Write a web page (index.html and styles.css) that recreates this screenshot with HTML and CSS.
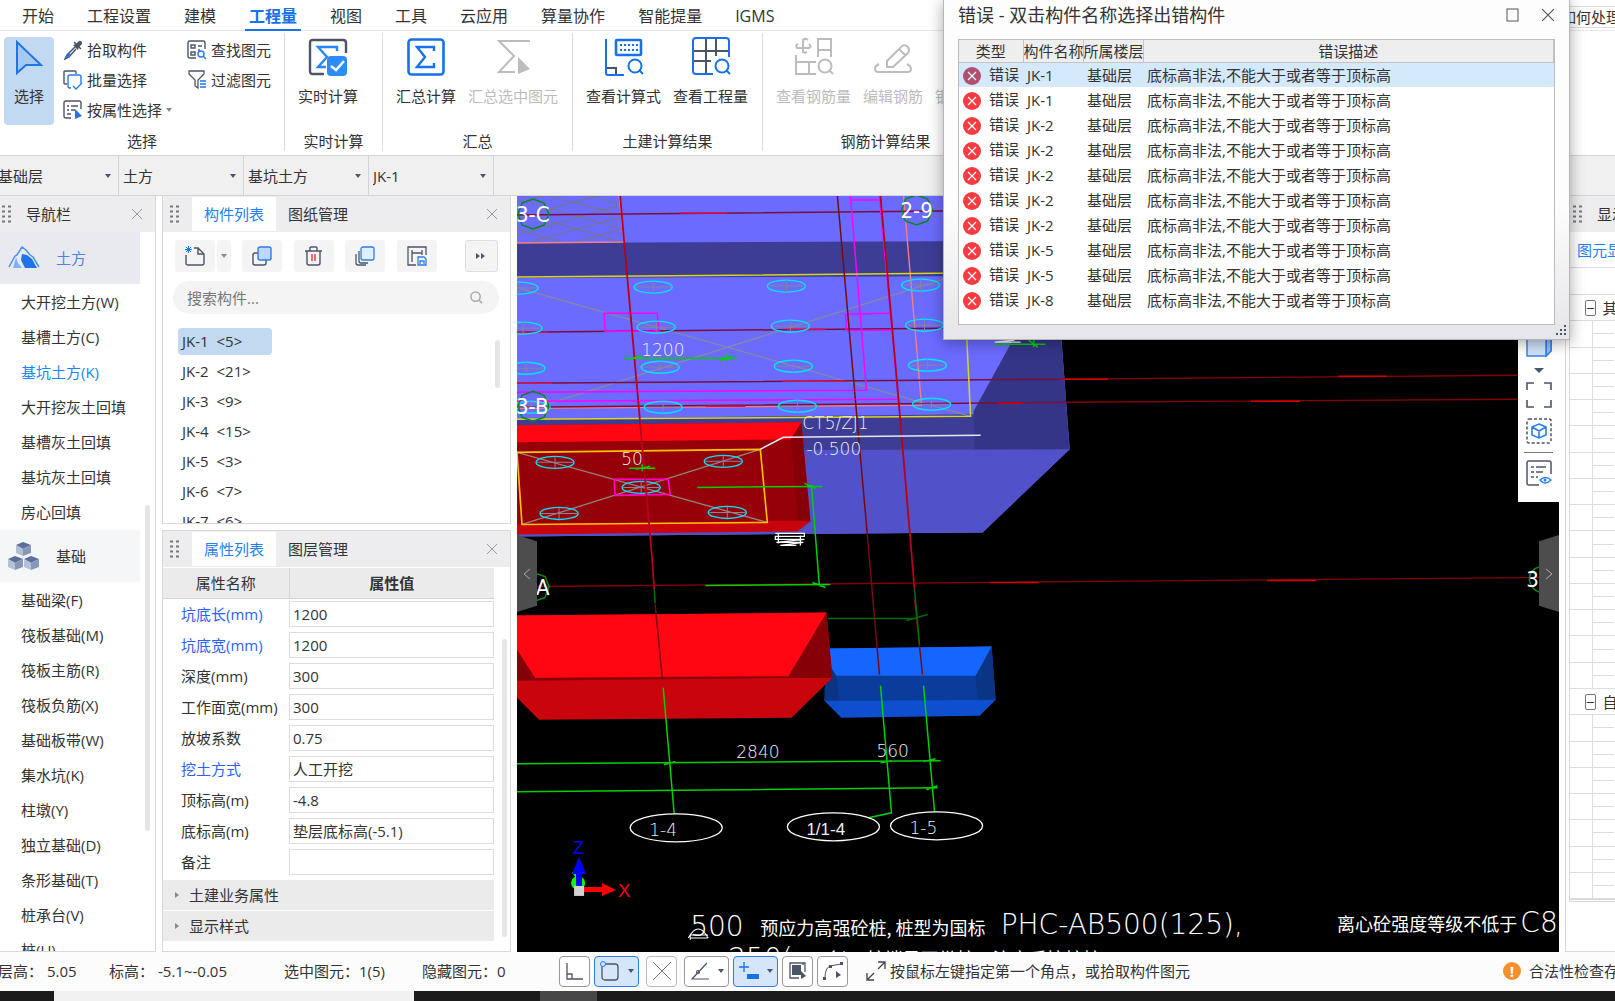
FILE: index.html
```html
<!DOCTYPE html>
<html lang="zh-CN">
<head>
    <meta charset="UTF-8">
    <title>工程量</title>
    <link rel="stylesheet" href="styles.css">
</head>
<body>

<!-- 公用图形 -->
<svg class="defs" aria-hidden="true">
    <symbol id="close" viewBox="0 0 12 12"><path d="M1 1L11 11M11 1L1 11" fill="none" stroke="currentColor"/></symbol>
    <symbol id="grip" viewBox="0 0 9 19">
        <path d="M0 1.5H9M0 6.5H9M0 11.5H9M0 16.5H9" stroke="#777" stroke-width="2" stroke-dasharray="3 3"/>
    </symbol>
    <symbol id="error" viewBox="0 0 18 18">
        <circle cx="9" cy="9" r="9" fill="currentColor"/>
        <path d="M5 5L13 13M13 5L5 13" stroke="#fff" stroke-width="1.2"/>
    </symbol>
    <symbol id="lens" viewBox="0 0 14 14">
        <circle cx="6" cy="6" r="5" fill="none" stroke="currentColor" stroke-width="1.6"/>
        <path d="M10 10L13 13" stroke="currentColor" stroke-width="1.8"/>
    </symbol>
</svg>

<nav class="menu">
    <a href="#">开始</a>
    <a href="#">工程设置</a>
    <a href="#">建模</a>
    <a href="#" class="active">工程量</a>
    <a href="#">视图</a>
    <a href="#">工具</a>
    <a href="#">云应用</a>
    <a href="#">算量协作</a>
    <a href="#">智能提量</a>
    <a href="#">IGMS</a>
    <input class="ask" type="text" value="如何处理" aria-label="帮助搜索">
</nav>

<div class="ribbon">
    <section class="group pick">
        <div class="tools">
            <button class="big on">
                <svg width="28" height="38" viewBox="0 0 28 38"><path d="M2 4V35L11 27L26 27Z" fill="#a9c8f0" stroke="#1f74e8" stroke-width="2"/></svg>
                选择
            </button>
            <div class="stack">
                <button>
                    <svg width="20" height="20" viewBox="0 0 20 20"><path d="M11 2L18 9M12 7L4 15L2 19L6 17L13 9" fill="none" stroke="#4c5468" stroke-width="1.5"/><path d="M10 5L13 4L16 1Q19 0 19 4L16 7L15 10Z" fill="#4c5468"/><path d="M5 13L8 14L4 18L2 18Z" fill="#1f74e8"/></svg>
                    拾取构件
                </button>
                <button>
                    <svg width="20" height="20" viewBox="0 0 20 20" fill="none" stroke-width="1.4"><path d="M4 14H2Q1 14 1 13V2Q1 1 2 1H12Q13 1 13 2V4" stroke="#4c5468"/><path d="M8 18H7Q5 18 5 16V7Q5 5 7 5H16Q18 5 18 7V14M10 16L13 19L19 13" stroke="#2b7de9"/></svg>
                    批量选择
                </button>
                <button>
                    <svg width="20" height="20" viewBox="0 0 20 20"><path d="M8 18H3Q1 18 1 16V3Q1 1 3 1H16Q18 1 18 3V9M4 6H6M8 6H15M4 10H6M8 10H12M4 14H8" fill="none" stroke="#4c5468" stroke-width="1.4"/><path d="M12 9V19L19 16Z" fill="#1f74e8"/></svg>
                    按属性选择<i class="arrow light"></i>
                </button>
            </div>
            <div class="stack">
                <button>
                    <svg width="20" height="20" viewBox="0 0 20 20" fill="none" stroke-width="1.4"><path d="M9 18H3Q1 18 1 16V3Q1 1 3 1H16Q18 1 18 3V9M4 5H8V8H4ZM4 12H8V15H4ZM11 6H15M11 10H13" stroke="#4c5468"/><circle cx="14" cy="14" r="3" stroke="#2b7de9"/><path d="M16 16L19 19" stroke="#2b7de9"/></svg>
                    查找图元
                </button>
                <button>
                    <svg width="20" height="20" viewBox="0 0 20 20" fill="none"><path d="M2 1H17V4L11 10V18L8 16V10L2 4Z" stroke="#4c5468" stroke-width="1.3"/><path d="M13 11H19M13 14H19M13 17H19" stroke="#1f74e8" stroke-width="1.6"/></svg>
                    过滤图元
                </button>
            </div>
        </div>
        <h2>选择</h2>
    </section>
    <section class="group single">
        <div class="tools">
            <button class="big">
                <svg width="40" height="38" viewBox="0 0 40 38" fill="none"><path d="M16 36H5Q2 36 2 33V5Q2 2 5 2H35Q38 2 38 5V15" stroke="#4c5468" stroke-width="2.4"/><path d="M29 13V9H10L19 19L10 29H18" stroke="#2b86f5" stroke-width="2.4"/><rect x="19" y="18" width="20" height="20" rx="4" fill="#2b8cff"/><path d="M23 28L28 32L36 23" stroke="#fff" stroke-width="2.4"/></svg>
                实时计算
            </button>
        </div>
        <h2>实时计算</h2>
    </section>
    <section class="group">
        <div class="tools">
            <button class="big">
                <svg width="38" height="38" viewBox="0 0 38 38" fill="none" stroke="#1671ea"><rect x="1.5" y="1.5" width="35" height="35" rx="3" stroke-width="2.6"/><path d="M27 13V9H10L18 19L10 29H27V25" stroke-width="2.4"/></svg>
                汇总计算
            </button>
            <button class="big" disabled>
                <svg width="38" height="38" viewBox="0 0 38 38"><path d="M36 3H5L20 18L5 34H21" fill="none" stroke="#bcbcbc" stroke-width="2"/><path d="M24 19V36L36 31Z" fill="#bcbcbc"/></svg>
                汇总选中图元
            </button>
        </div>
        <h2>汇总</h2>
    </section>
    <section class="group">
        <div class="tools">
            <button class="big">
                <svg width="40" height="40" viewBox="0 0 40 40" fill="none" stroke="#1671ea" stroke-width="2"><path d="M2 2V36Q2 38 4 38H20"/><path d="M3 31H12V37" stroke="#4c5468"/><rect x="12" y="3" width="25" height="15" rx="1" stroke-width="2.6"/><path d="M16 8H34M16 13H34" stroke-dasharray="2 2"/><circle cx="31" cy="29" r="6.5"/><path d="M35 33L39 37"/></svg>
                查看计算式
            </button>
            <button class="big">
                <svg width="40" height="40" viewBox="0 0 40 40" fill="none" stroke-width="2"><path d="M15 2V36M25 2V19M2 14H37M2 24H20" stroke="#4c5468"/><path d="M22 37H5Q2 37 2 34V4Q2 1 5 1H35Q38 1 38 4V20" stroke="#1671ea"/><circle cx="31" cy="29" r="6.5" stroke="#1671ea"/><path d="M35 33L39 37" stroke="#1671ea"/></svg>
                查看工程量
            </button>
        </div>
        <h2>土建计算结果</h2>
    </section>
    <section class="group steel">
        <div class="tools">
            <button class="big" disabled>
                <svg width="40" height="40" viewBox="0 0 40 40" fill="none" stroke="#bcbcbc" stroke-width="2"><path d="M9 16V4Q9 1 12 2M14 3Q10 0 9 4M4 7Q1 8 3 11H15Q18 10 15 7M9 13Q9 17 13 15M24 20V2H37V20M24 13H37M2 18V37H22M2 25H22M15 25V37"/><circle cx="31" cy="29" r="6.5"/><path d="M35 33L39 37"/></svg>
                查看钢筋量
            </button>
            <button class="big" disabled>
                <svg width="38" height="38" viewBox="0 0 38 38" fill="none" stroke="#bcbcbc" stroke-width="2"><path d="M5 26Q1 28 1 31Q1 34 5 34H33Q37 34 37 31Q37 28 33 26M13 29V23L28 8Q31 6 34 9Q36 12 34 15L19 29ZM25 11L31 17"/></svg>
                编辑钢筋
            </button>
            <button class="big" disabled>
                <svg width="38" height="38" viewBox="0 0 38 38" fill="none" stroke="#bcbcbc" stroke-width="2"><path d="M19 3L34 11V27L19 35L4 27V11Z"/></svg>
                钢筋三维
            </button>
        </div>
        <h2>钢筋计算结果</h2>
    </section>
</div>

<div class="filters">
    <label><select aria-label="楼层"><option>基础层</option></select><i class="arrow"></i></label>
    <label><select aria-label="类别"><option>土方</option></select><i class="arrow"></i></label>
    <label><select aria-label="构件类型"><option>基坑土方</option></select><i class="arrow"></i></label>
    <label><select aria-label="构件"><option>JK-1</option></select><i class="arrow"></i></label>
</div>

<main class="main">
    <!-- 导航栏 -->
    <aside class="panel side">
        <div class="head">
            <svg class="grip"><use href="#grip"/></svg>
            <span class="title">导航栏</span>
            <button class="close" aria-label="关闭"><svg><use href="#close"/></svg></button>
        </div>
        <div class="tree">
            <div class="cat active">
                <svg width="32" height="24" viewBox="0 0 32 24"><path d="M1 21L7 10L9 9L14 1L18 4L22 9L25 11L31 21" fill="none" stroke="#4b90ef" stroke-width="1.5"/><path d="M14 8L19 9L24 13L29 22H17L13 14Z" fill="#1f74e8"/><path d="M8 11L10 17L14 22H5Z" fill="#7fb3f7"/></svg>
                土方
            </div>
            <ul>
                <li>大开挖土方(W)</li>
                <li>基槽土方(C)</li>
                <li class="active">基坑土方(K)</li>
                <li>大开挖灰土回填</li>
                <li>基槽灰土回填</li>
                <li>基坑灰土回填</li>
                <li>房心回填</li>
            </ul>
            <div class="cat">
                <svg width="32" height="30" viewBox="0 0 32 30">
                    <g id="box"><path d="M8 4L15 1L23 4L15 8Z" fill="#5b6f98"/><path d="M8 4L15 8V15L8 12Z" fill="#b4bfd6"/><path d="M23 4L15 8V15L23 12Z" fill="#8797b8"/></g>
                    <use href="#box" x="-8" y="14"/><use href="#box" x="8" y="14"/>
                </svg>
                基础
            </div>
            <ul>
                <li>基础梁(F)</li>
                <li>筏板基础(M)</li>
                <li>筏板主筋(R)</li>
                <li>筏板负筋(X)</li>
                <li>基础板带(W)</li>
                <li>集水坑(K)</li>
                <li>柱墩(Y)</li>
                <li>独立基础(D)</li>
                <li>条形基础(T)</li>
                <li>桩承台(V)</li>
                <li>桩(U)</li>
            </ul>
            <i class="bar"></i>
        </div>
    </aside>

    <div class="middle">
        <!-- 构件列表 -->
        <section class="panel parts">
            <div class="head">
                <svg class="grip"><use href="#grip"/></svg>
                <button class="tab active">构件列表</button>
                <button class="tab">图纸管理</button>
                <button class="close" aria-label="关闭"><svg><use href="#close"/></svg></button>
            </div>
            <div class="toolbar">
                <span class="split">
                    <button aria-label="新建"><svg width="20" height="20" viewBox="0 0 20 20" fill="none"><path d="M9 2H13L19 8V17Q19 19 17 19H3Q1 19 1 17V9M13 2V8H19" stroke="#4c5468" stroke-width="1.4"/><path d="M1 1L6 6M6 1L1 6M3.5 0V7M0 3.5H7" stroke="#1f74e8"/></svg></button>
                    <button class="drop" aria-label="更多新建"><i class="arrow light"></i></button>
                </span>
                <button aria-label="复制"><svg width="20" height="20" viewBox="0 0 20 20"><path d="M6 7H3Q1 7 1 9V17Q1 19 3 19H12Q14 19 14 17V14" fill="none" stroke="#4c5468" stroke-width="1.4"/><rect x="6" y="1" width="13" height="13" rx="2" fill="#bcd8fb" stroke="#2b7de9" stroke-width="1.4"/></svg></button>
                <button aria-label="删除"><svg width="20" height="20" viewBox="0 0 20 20" fill="none" stroke="#4c5468" stroke-width="1.4"><path d="M1 5H18M6 5V2Q6 1 7 1H12Q13 1 13 2V5M3 5V17Q3 19 5 19H14Q16 19 16 17V5"/><path d="M8 8V15M11 8V15" stroke="#e8343c"/></svg></button>
                <button aria-label="层间复制"><svg width="20" height="20" viewBox="0 0 20 20" fill="none" stroke="#4c5468" stroke-width="1.3"><path d="M4 5V15Q4 17 6 17H13M1 8V17Q1 19 3 19H11"/><rect x="6" y="1" width="13" height="13" rx="2" fill="#e1eefd" stroke="#2b7de9"/></svg></button>
                <button aria-label="构件存档"><svg width="20" height="20" viewBox="0 0 20 20" fill="none" stroke="#4c5468" stroke-width="1.3"><path d="M9 19H1V1H19V9M5 4V16M5 7H15M15 4V9"/><path d="M11 11H17L19 13V19H11ZM13 18V15H17V18" stroke="#2b7de9"/></svg></button>
                <button class="more" aria-label="展开"><svg width="12" height="10" viewBox="0 0 12 10"><path d="M1 2L5 5L1 8ZM6 2L10 5L6 8Z" fill="#4c5468"/></svg></button>
            </div>
            <label class="search">
                <input type="text" placeholder="搜索构件..." aria-label="搜索构件">
                <svg width="13" height="13"><use href="#lens"/></svg>
            </label>
            <ul class="list">
                <li class="on">JK-1 <span>&lt;5&gt;</span></li>
                <li>JK-2 <span>&lt;21&gt;</span></li>
                <li>JK-3 <span>&lt;9&gt;</span></li>
                <li>JK-4 <span>&lt;15&gt;</span></li>
                <li>JK-5 <span>&lt;3&gt;</span></li>
                <li>JK-6 <span>&lt;7&gt;</span></li>
                <li>JK-7 <span>&lt;6&gt;</span></li>
            </ul>
            <i class="bar"></i>
        </section>

        <!-- 属性列表 -->
        <section class="panel props">
            <div class="head">
                <svg class="grip"><use href="#grip"/></svg>
                <button class="tab active">属性列表</button>
                <button class="tab">图层管理</button>
                <button class="close" aria-label="关闭"><svg><use href="#close"/></svg></button>
            </div>
            <table>
                <thead>
                <tr><th>属性名称</th><th>属性值</th></tr>
                </thead>
                <tbody>
                <tr class="key"><td><label for="p1">坑底长(mm)</label></td><td><input id="p1" type="text" value="1200"></td></tr>
                <tr class="key"><td><label for="p2">坑底宽(mm)</label></td><td><input id="p2" type="text" value="1200"></td></tr>
                <tr><td><label for="p3">深度(mm)</label></td><td><input id="p3" type="text" value="300"></td></tr>
                <tr><td><label for="p4">工作面宽(mm)</label></td><td><input id="p4" type="text" value="300"></td></tr>
                <tr><td><label for="p5">放坡系数</label></td><td><input id="p5" type="text" value="0.75"></td></tr>
                <tr class="key"><td><label for="p6">挖土方式</label></td><td><input id="p6" type="text" value="人工开挖"></td></tr>
                <tr><td><label for="p7">顶标高(m)</label></td><td><input id="p7" type="text" value="-4.8"></td></tr>
                <tr><td><label for="p8">底标高(m)</label></td><td><input id="p8" type="text" value="垫层底标高(-5.1)"></td></tr>
                <tr><td><label for="p9">备注</label></td><td><input id="p9" type="text" value=""></td></tr>
                </tbody>
            </table>
            <button class="fold">土建业务属性</button>
            <button class="fold">显示样式</button>
            <i class="bar"></i>
        </section>
    </div>

    <!-- 绘图区 -->
    <div class="view">
        <svg class="scene" viewBox="517 197 1042 755" preserveAspectRatio="xMinYMin slice">
            <defs>
                <g id="pile"><ellipse rx="19" ry="6" fill="none" stroke="#00e5ff" stroke-width="1.4"/><path d="M-18 0H18M0 -6V6" stroke="#84849c"/></g>
            </defs>
            <!-- 大基坑 -->
            <path d="M517 197H1050L1069 450L982 533L517 537Z" fill="#6b6bff"/>
            <path d="M517 244L1000 242V277L517 279Z" fill="#3d3d96"/>
            <path d="M517 420L975 415V451H517Z" fill="#3d3d96"/>
            <path d="M1050 197L1069 451H974L973 412L1018 330Z" fill="#353588"/>
            <path d="M517 451L1069 450L982 533L517 537Z" fill="#5151c9"/>
            <g fill="none" stroke="#77778a">
                <path d="M517 203L545 197M517 220L595 197M517 236L620 206M530 243L622 218M575 243L622 230M517 213L620 243M530 204L622 230M550 197L621 216M517 230L560 243M590 197L620 205"/>
                <path d="M519 289L970 417M540 407L943 280" stroke="#8787a6" stroke-width="1.3"/>
            </g>
            <path d="M903 197L921 406L517 409M619 197L624 243L517 244" fill="none" stroke="#f77c86" stroke-width="1.4"/>
            <g stroke="#7c0c3c" stroke-width="1.5">
                <path d="M517 216L943 212M517 333L943 329M517 384L1066 380M517 408L1066 403"/>
            </g>
            <path d="M680 214H727M517 333H548M785 330H825M517 384H552M782 382H845M705 407H745" stroke="#d8104c" stroke-width="1.5"/>
            <g fill="none" stroke="#f0f" stroke-width="1.5">
                <path d="M604 314H657L659 332H605ZM850 197L866 391L517 393M850 201H880M879 197L898 400L517 402M889 314L845 315L846 331H892"/>
            </g>
            <path d="M517 278L963 274L970 417L517 420" fill="none" stroke="#d9d61c" stroke-width="1.5"/>
            <use href="#pile" x="519" y="289"/><use href="#pile" x="653" y="288"/><use href="#pile" x="786" y="287"/><use href="#pile" x="920" y="286"/>
            <use href="#pile" x="523" y="329"/><use href="#pile" x="656" y="328"/><use href="#pile" x="790" y="327"/><use href="#pile" x="924" y="326"/>
            <use href="#pile" x="526" y="369"/><use href="#pile" x="660" y="368"/><use href="#pile" x="793" y="367"/><use href="#pile" x="927" y="366"/>
            <use href="#pile" x="531" y="408"/><use href="#pile" x="663" y="408"/><use href="#pile" x="797" y="407"/><use href="#pile" x="931" y="405"/>

            <!-- 红色基坑 -->
            <path d="M517 426L801 423L810 522L797 532L517 535Z" fill="#c8040c"/>
            <path d="M517 443L790 440L797 521L517 525Z" fill="#960008"/>
            <path d="M801 423L810 522L797 521L790 440Z" fill="#850007"/>
            <path d="M517 426L801 423L790 440L517 443Z" fill="#ff0612"/>
            <path d="M517 453L767 523M522 525L760 450" stroke="#958080" stroke-width="1.3"/>
            <path d="M517 453L760 450L767 523L522 525Z" fill="none" stroke="#ffc400" stroke-width="1.6"/>
            <path d="M614 480H668L670 495L615 496Z" fill="none" stroke="#f0c" stroke-width="1.6"/>
            <use href="#pile" x="555" y="463"/><use href="#pile" x="723" y="462"/><use href="#pile" x="641" y="488"/><use href="#pile" x="559" y="514"/><use href="#pile" x="727" y="513"/>

            <!-- 蓝色基坑 -->
            <path d="M829 649L991 647L995 700L979 716L841 718L824 701Z" fill="#0e4fd0"/>
            <path d="M824 689L830 665L991 647L995 700L824 701Z" fill="#0a3484"/>
            <path d="M836 676H975L977 700H839Z" fill="#0a3c9c"/>
            <path d="M829 649L991 647L975 676H836L830 667Z" fill="#1566ff"/>

            <path d="M517 616L826 613L832 678L791 718L539 720L517 698Z" fill="#c8040c"/>
            <path d="M517 650L536 678L788 677L826 613L832 678L517 681Z" fill="#850007"/>
            <path d="M517 616L826 613L788 676L535 678L517 650Z" fill="#ff0612"/>

            <!-- 轴线 -->
            <g fill="none" stroke="#b8001c" stroke-width="1.8">
                <path d="M620 197L652 560L654 590M880 197L898 400L909 530L914 590"/>
                <path d="M655 605L662 678M914 600L922 675M837 197L869 560L879 675" stroke="#780a14" stroke-width="1.5"/>
            </g>
            <path d="M1060 380L1518 376M1066 403L1518 400M536 587L1539 578" stroke="#860000" stroke-width="1.3"/>
            <path d="M1060 380H1107M1337 377H1385M997 404H1022M1250 402H1299M989 583H1038M1266 581H1315" stroke="#d40000" stroke-width="1.5"/>
            <g fill="none" stroke="#00d000" stroke-width="1.5">
                <path d="M663 688L674 814M880 686L891 813L868 818M923 686L934 812"/>
                <path d="M517 764L940 761M517 792L937 788M664 765L675 762M880 763L891 761M923 762L935 759M926 790L937 786"/>
                <path d="M654 590L655 604M914 590L919 645" stroke="#007000"/>
                <path d="M827 619H916M906 621L927 615" stroke="#006a00"/>
                <path d="M624 359H737M629 360L641 357M720 361L732 357M726 355V362M629 469H655M636 470L650 467M642 465V472"/>
                <path d="M697 488L822 487M804 484L815 489M811 485L819 587M705 586L830 585M812 583L825 588"/>
                <path d="M994 345H1045M1028 341L1037 348M1033 340V348"/>
            </g>
            <g fill="none" stroke="#008a20" stroke-width="1.5">
                <path d="M533 200L544 204L549 215L544 226L533 230L522 226L518 215L522 204ZM533 392L544 396L549 407L544 418L533 422L522 418L518 407L522 396ZM916 196L927 200L932 211L927 222L916 226L905 222L901 211L905 200Z"/>
                <path d="M536 574L545 577L549 587L545 598L536 601M1539 567Q1528 570 1528 580Q1529 590 1539 593"/>
            </g>
            <path d="M760 450L783 438L980 436" fill="none" stroke="#e6e6f5" stroke-width="1.5"/>
            <path d="M775 534H804V537H775V540H804L776 543H803L780 546H796M778 534V544M800 536V546M994 339L1014 341L994 343H1020" fill="none" stroke="#fff" stroke-width="1.3"/>
            <g fill="none" stroke="#fff" stroke-width="1.3">
                <ellipse cx="676" cy="828" rx="46" ry="14"/><ellipse cx="833" cy="827" rx="46" ry="14"/><ellipse cx="936" cy="826" rx="46" ry="14"/>
            </g>

            <g class="cad">
                <text x="516" y="223" class="axis">3-C</text>
                <text x="516" y="415" class="axis">3-B</text>
                <text x="900" y="219" class="axis">2-9</text>
                <text x="536" y="595" class="axis">A</text>
                <text x="1525" y="587" class="axis">3</text>
                <text x="641" y="357">1200</text>
                <text x="621" y="466">50</text>
                <text x="802" y="430">CT5/ZJ1</text>
                <text x="806" y="456">-0.500</text>
                <text x="736" y="758">2840</text>
                <text x="876" y="757">560</text>
                <text x="649" y="836">1-4</text>
                <text x="806" y="835" class="thin">1/1-4</text>
                <text x="909" y="834">1-5</text>
            </g>
            <g class="note">
                <text x="690" y="936" class="wide">500</text>
                <path d="M688 938Q698 920 708 938M690 938H707V935H690V940" fill="none" stroke="#fff"/>
                <text x="760" y="935">预应力高强砼桩, 桩型为国标</text>
                <text x="1000" y="934" class="wide">PHC-AB500(125),</text>
                <text x="1336" y="931">离心砼强度等级不低于</text>
                <text x="1519" y="932" class="wide">C80</text>
                <text x="728" y="968" class="wide">250(</text>
                <text x="824" y="966">会)，桩端是否带桩，注意后接桩桩</text>
            </g>

            <!-- 坐标轴 -->
            <circle cx="578" cy="883" r="7" fill="#0f0"/>
            <path d="M573 872L577 878" stroke="#0f0" stroke-width="2"/>
            <path d="M579 857L586 874H582V890H576V874H572Z" fill="#00f"/>
            <path d="M583 887H602V883L616 890L602 896V892H583Z" fill="#f00"/>
            <rect x="574" y="886" width="10" height="10" fill="#d2d2d2"/>
            <text x="573" y="854" class="zaxis">Z</text>
            <text x="618" y="897" class="xaxis">X</text>
        </svg>
        <button class="handle left" aria-label="收起左侧"><svg width="8" height="12" viewBox="0 0 8 12"><path d="M7 1L1 6L7 11" fill="none" stroke="#aaa"/></svg></button>
        <button class="handle right" aria-label="收起右侧"><svg width="8" height="12" viewBox="0 0 8 12"><path d="M1 1L7 6L1 11" fill="none" stroke="#aaa"/></svg></button>
        <div class="viewbar">
            <button aria-label="视角"><svg width="26" height="26" viewBox="0 0 26 26" stroke="#2b7de9" stroke-width="1.4"><path d="M1 5L5 1H25V20L20 25V5Z" fill="#fff"/><path d="M20 5L25 1V20L20 25Z" fill="#8fc0fb"/><rect x="1" y="5" width="19" height="20" fill="#cfe2fb"/></svg></button>
            <i class="arrow"></i>
            <button aria-label="全屏"><svg width="26" height="26" viewBox="0 0 26 26"><path d="M1 8V1H8M18 1H25V8M25 18V25H18M8 25H1V18" fill="none" stroke="#4c5468" stroke-width="1.6"/></svg></button>
            <button aria-label="局部三维"><svg width="26" height="26" viewBox="0 0 26 26" fill="none"><rect x="1" y="1" width="24" height="24" rx="2" stroke="#4c5468" stroke-width="1.5" stroke-dasharray="3 2"/><path d="M13 6L20 9V17L13 20L6 17V9ZM6 9L13 13L20 9M13 13V20" stroke="#2b7de9" stroke-width="1.6"/></svg></button>
            <hr>
            <button aria-label="显示设置"><svg width="26" height="26" viewBox="0 0 26 26" fill="none"><path d="M13 25H3Q1 25 1 23V3Q1 1 3 1H23Q25 1 25 3V14M5 7H8M10 7H20M5 12H8M10 12H17M5 17H8M10 17H12" stroke="#4c5468" stroke-width="1.5"/><path d="M14 20Q19 15 25 20Q19 26 14 20Z" stroke="#2b7de9" stroke-width="1.4"/><circle cx="19" cy="20" r="1.5" fill="#2b7de9"/></svg></button>
        </div>
    </div>

    <!-- 显示设置 -->
    <aside class="panel display">
        <div class="head">
            <svg class="grip"><use href="#grip"/></svg>
            <span class="title">显示设置</span>
        </div>
        <a class="sub" href="#">图元显示</a>
        <ul class="rows">
            <li class="node"><button aria-label="折叠">−</button>其他</li>
            <li></li><li></li><li></li><li></li><li></li><li></li><li></li>
            <li></li><li></li><li></li><li></li><li></li><li></li><li></li>
            <li class="node"><button aria-label="折叠">−</button>自定义</li>
            <li></li><li></li><li></li><li></li><li></li><li></li><li></li>
        </ul>
    </aside>
</main>

<footer class="status">
    <div class="info">
        <span class="floor">层高：<b>5.05</b></span>
        <span class="level">标高：<b>-5.1~-0.05</b></span>
        <span class="picked">选中图元：<b>1(5)</b></span>
        <span class="hidden">隐藏图元：<b>0</b></span>
    </div>
    <div class="snaps">
        <button aria-label="正交"><svg width="18" height="18" viewBox="0 0 18 18" fill="none" stroke="#4c5468" stroke-width="1.3"><path d="M1 1V17H17M1 12H6V17"/></svg></button>
        <button class="on" aria-label="矩形选择"><svg width="20" height="20" viewBox="0 0 20 20" fill="none"><rect x="2" y="3" width="16" height="16" rx="3" stroke="#4c5468" stroke-width="1.3"/><circle cx="3" cy="3" r="2.5" fill="#d5e5fa" stroke="#2b7de9"/></svg><i class="arrow"></i></button>
        <button class="dim" aria-label="交点"><svg width="20" height="20" viewBox="0 0 20 20"><path d="M1 1L19 19M19 1L1 19" stroke="#777"/></svg></button>
        <button aria-label="角度"><svg width="20" height="20" viewBox="0 0 20 20" fill="none" stroke="#4c5468" stroke-width="1.2"><path d="M17 2L2 18H19"/><circle cx="8" cy="11" r="1.5"/></svg><i class="arrow"></i></button>
        <button class="on" aria-label="偏移"><svg width="20" height="20" viewBox="0 0 20 20"><path d="M5 1V11M0 6H10" stroke="#1671ea" stroke-width="1.3"/><rect x="8" y="13" width="12" height="5" fill="#1671ea"/></svg><i class="arrow"></i></button>
        <button aria-label="图层"><svg width="18" height="18" viewBox="0 0 18 18"><rect x="3" y="3" width="9" height="10" fill="#4c5468"/><path d="M10 16H1V1H14V3M14 1H16V10M4 16H10" fill="none" stroke="#4c5468" stroke-width="1.3"/><path d="M12 9V17L17 14Z" fill="#4c5468"/></svg></button>
        <button aria-label="折线"><svg width="20" height="18" viewBox="0 0 20 18"><path d="M2 16Q2 6 7 4L18 2" fill="none" stroke="#4c5468"/><path d="M0 15H3V18H0ZM6 3H9V6H6ZM17 0H20V3H17ZM13 9V16L18 13Z" fill="#4c5468"/></svg></button>
    </div>
    <p class="tip">
        <svg width="20" height="20" viewBox="0 0 20 20"><path d="M12 8L19 1M12 1H19V8M8 12L1 19M1 12V19H8" fill="none" stroke="#444" stroke-width="1.3"/></svg>
        按鼠标左键指定第一个角点，或拾取构件图元
    </p>
    <p class="warn"><i>!</i>合法性检查存在</p>
</footer>
<div class="taskbar"><i class="window"></i><i class="task"></i></div>

<!-- 错误提示窗口 -->
<div class="dialog" role="dialog" aria-label="错误">
    <div class="caption">
        <h1>错误 - 双击构件名称选择出错构件</h1>
        <button aria-label="最大化"><svg width="14" height="14" viewBox="0 0 14 14"><rect x="1" y="1" width="11" height="12" fill="none" stroke="#555"/></svg></button>
        <button aria-label="关闭"><svg width="14" height="14"><use href="#close"/></svg></button>
    </div>
    <div class="frame">
        <table>
            <thead>
            <tr><th class="c1">类型</th><th class="c2">构件名称</th><th class="c3">所属楼层</th><th>错误描述</th></tr>
            </thead>
            <tbody>
            <tr class="on"><td><svg><use href="#error"/></svg>错误</td><td>JK-1</td><td>基础层</td><td>底标高非法,不能大于或者等于顶标高</td></tr>
            <tr><td><svg><use href="#error"/></svg>错误</td><td>JK-1</td><td>基础层</td><td>底标高非法,不能大于或者等于顶标高</td></tr>
            <tr><td><svg><use href="#error"/></svg>错误</td><td>JK-2</td><td>基础层</td><td>底标高非法,不能大于或者等于顶标高</td></tr>
            <tr><td><svg><use href="#error"/></svg>错误</td><td>JK-2</td><td>基础层</td><td>底标高非法,不能大于或者等于顶标高</td></tr>
            <tr><td><svg><use href="#error"/></svg>错误</td><td>JK-2</td><td>基础层</td><td>底标高非法,不能大于或者等于顶标高</td></tr>
            <tr><td><svg><use href="#error"/></svg>错误</td><td>JK-2</td><td>基础层</td><td>底标高非法,不能大于或者等于顶标高</td></tr>
            <tr><td><svg><use href="#error"/></svg>错误</td><td>JK-2</td><td>基础层</td><td>底标高非法,不能大于或者等于顶标高</td></tr>
            <tr><td><svg><use href="#error"/></svg>错误</td><td>JK-5</td><td>基础层</td><td>底标高非法,不能大于或者等于顶标高</td></tr>
            <tr><td><svg><use href="#error"/></svg>错误</td><td>JK-5</td><td>基础层</td><td>底标高非法,不能大于或者等于顶标高</td></tr>
            <tr><td><svg><use href="#error"/></svg>错误</td><td>JK-8</td><td>基础层</td><td>底标高非法,不能大于或者等于顶标高</td></tr>
            </tbody>
        </table>
    </div>
    <svg class="resize" width="10" height="10" viewBox="0 0 10 10"><path d="M8 0H10V2H8ZM4 4H6V6H4ZM8 4H10V6H8ZM0 8H2V10H0ZM4 8H6V10H4ZM8 8H10V10H8Z" fill="#4c5468"/></svg>
</div>

</body>
</html>
```

FILE: styles.css
```css
* {
    padding: 0;
    margin: 0;
    box-sizing: border-box;
}
body {
    height: 100vh;
    display: flex;
    flex-direction: column;
    overflow: hidden;
    position: relative;
    font: 15px/20px "Open Sans", "Noto Sans CJK SC", sans-serif;
    color: #333;
    background: #fff;
}
button, input, select {
    font: inherit;
    color: inherit;
    border: 0;
    background: none;
    outline: none;
}
button {
    cursor: pointer;
    white-space: nowrap;
}
a {
    color: inherit;
    text-decoration: none;
}
ul {
    list-style: none;
}
i {
    font-style: normal;
}
svg {
    flex: none;
}
.defs {
    position: absolute;
    width: 0;
    height: 0;
}
.arrow {
    display: inline-block;
    flex: none;
    border: 3px solid transparent;
    border-top: 4px solid #4c5468;
    border-bottom: 0;
}
.arrow.light {
    border-top-color: #888;
}

/* 菜单 */
.menu {
    flex: none;
    height: 31px;
    display: flex;
    gap: 33px;
    padding-left: 22px;
    font-size: 16px;
    line-height: 32px;
    border-bottom: 1px solid #e8e8e8;
}
.menu a {
    flex: none;
}
.menu .active {
    color: #1671ea;
    font-weight: 700;
    box-shadow: 0 2px #1671ea;
    height: 29px;
    padding: 0 4px;
    margin: 0 -4px;
}
.menu .ask {
    width: 64px;
    height: 22px;
    margin: 6px 0 0 auto;
    padding-left: 9px;
    font-size: 15px;
    border: 1px solid #ddd;
    border-right: 0;
}

/* 功能区 */
.ribbon {
    flex: none;
    height: 125px;
    display: flex;
    padding-top: 2px;
    border-bottom: 1px solid #d4d4d4;
}
.group {
    flex: none;
    width: 190px;
    height: 118px;
    padding: 0 13px;
    border-right: 1px solid #ddd;
    display: flex;
    flex-direction: column;
}
.group.pick {
    width: 285px;
    padding: 0 4px;
}
.group.single {
    width: 98px;
}
.group.steel {
    width: auto;
    border: 0;
}
.group h2 {
    font-size: 15px;
    font-weight: 400;
    text-align: center;
}
.tools {
    flex: 1;
    display: flex;
    gap: 12px;
}
.pick .tools {
    gap: 8px;
}
.big {
    flex: none;
    height: 88px;
    margin-top: 4px;
    display: flex;
    flex-direction: column;
    align-items: center;
}
.big svg {
    height: 40px;
    margin-bottom: 9px;
}
.big:disabled {
    color: #bcbcbc;
}
.big.on {
    width: 50px;
    border-radius: 4px;
    background: #c2d9f2;
}
.stack {
    width: 115px;
    padding-top: 2px;
}
.stack button {
    height: 30px;
    display: flex;
    align-items: center;
    gap: 4px;
}
.stack svg {
    margin-left: 1px;
}
.stack + .stack {
    padding-left: 6px;
}

/* 楼层选择 */
.filters {
    flex: none;
    height: 39px;
    display: flex;
    background: #f0f0f0;
    margin-left: -6px;
}
.filters label {
    flex: 0 0 125px;
    display: flex;
    align-items: center;
    border-right: 1px solid #d4d4d4;
    padding: 0 7px 0 4px;
}
.filters select {
    flex: 1;
    appearance: none;
}

/* 主体 */
.main {
    flex: 1;
    min-height: 0;
    display: grid;
    grid-template-columns: 156px 349px 1fr 50px;
    grid-template-rows: 100%;
    gap: 6px;
    border-top: 1px solid #d4d4d4;
}
.panel {
    position: relative;
    overflow: hidden;
    border: 1px solid #d9d9d9;
    border-top: 0;
    background: #fff;
}
.head {
    height: 36px;
    display: flex;
    align-items: center;
    background: #ededf0;
    white-space: nowrap;
}
.head .grip {
    width: 9px;
    height: 19px;
    margin: 0 13px 0 7px;
}
.head .tab {
    width: 84px;
    height: 34px;
}
.head .active {
    color: #2381f5;
    background: #fff;
}
.head .close {
    width: 12px;
    height: 12px;
    margin: 0 12px 0 auto;
    color: #999;
}
.close svg {
    display: block;
    width: 12px;
    height: 12px;
}
.bar {
    position: absolute;
    width: 5px;
    border-radius: 3px;
    background: #e6e6e6;
}

/* 导航栏 */
.side {
    border-left: 0;
}
.side .grip {
    margin: 0 15px 0 2px;
}
.tree li {
    height: 35px;
    line-height: 35px;
    padding-left: 21px;
    white-space: nowrap;
}
.tree ul {
    padding-top: 1px;
}
.tree li.active {
    color: #1787fb;
}
.cat {
    width: 140px;
    height: 52px;
    padding-left: 8px;
    display: flex;
    align-items: center;
    gap: 16px;
    background: #f5f6f8;
}
.cat.active {
    color: #4c85e6;
    background: #e8eaf0;
}
.tree .bar {
    right: 5px;
    top: 309px;
    height: 326px;
}

/* 构件列表 */
.middle {
    display: flex;
    flex-direction: column;
    gap: 6px;
    min-height: 0;
}
.parts {
    flex: 0 0 328px;
}
.toolbar {
    display: flex;
    justify-content: space-between;
    padding: 8px 12px 9px;
}
.toolbar button {
    width: 40px;
    height: 32px;
    border-radius: 3px;
    background: #f4f4f4;
    display: flex;
    align-items: center;
    justify-content: center;
}
.toolbar .split {
    display: flex;
    gap: 2px;
}
.toolbar .drop {
    width: 14px;
}
.toolbar .more {
    width: 33px;
    margin-left: 17px;
    border: 1px solid #ddd;
}
.search {
    height: 33px;
    margin: 0 11px 0 10px;
    padding: 0 16px 0 14px;
    border-radius: 17px;
    background: #f4f4f4;
    color: #aaa;
    display: flex;
    align-items: center;
}
.search input {
    flex: 1;
}
.search input::placeholder {
    color: #777;
}
.list {
    padding: 14px 0 0 15px;
}
.list li {
    width: 94px;
    height: 27px;
    line-height: 27px;
    margin-bottom: 3px;
    padding-left: 4px;
    border-radius: 4px;
}
.list .on {
    background: #c2d9f2;
}
.list span {
    margin-left: 4px;
}
.parts .bar {
    right: 10px;
    top: 144px;
    height: 48px;
}

/* 属性列表 */
.props {
    flex: 1;
    border-top: 1px solid #d9d9d9;
}
.props table {
    width: 331px;
    border-collapse: collapse;
    table-layout: fixed;
    margin: 1px 0 3px;
}
.props th {
    height: 30px;
    background: #ebebeb;
    border-bottom: 1px solid #d4d4d4;
}
.props th:first-child {
    width: 126px;
    font-weight: 400;
    border-right: 1px solid #d4d4d4;
}
.props tr > :first-child {
    white-space: nowrap;
}
.props td {
    height: 31px;
}
.props td:first-child {
    padding-left: 18px;
}
.props .key label {
    color: #2a62ff;
}
.props input {
    display: block;
    width: 100%;
    height: 26px;
    padding-left: 3px;
    border: 1px solid #ddd;
}
.fold {
    width: 331px;
    height: 30px;
    margin-bottom: 1px;
    padding-left: 12px;
    display: flex;
    align-items: center;
    gap: 10px;
    background: #ebebeb;
}
.fold::before {
    content: "";
    border: 3px solid transparent;
    border-left: 4px solid #888;
    border-right: 0;
}
.props .bar {
    right: 3px;
    top: 108px;
    height: 298px;
}

/* 绘图区 */
.view {
    position: relative;
    overflow: hidden;
    background: #000;
}
.scene {
    display: block;
    width: 100%;
    height: 100%;
}
.cad {
    font: 17px "DejaVu Sans", sans-serif;
    font-weight: 200;
    fill: #f0f0fa;
}
.cad .axis {
    font: 22px "DejaVu Sans Condensed", sans-serif;
    fill: #fff;
}
.cad .thin {
    font-family: "Liberation Sans", sans-serif;
}
.note {
    font: 18px "Noto Sans CJK SC", sans-serif;
    fill: #fff;
}
.note .wide {
    font: 200 28px "DejaVu Sans", sans-serif;
}
.zaxis, .xaxis {
    font: 18px "Liberation Sans", sans-serif;
    fill: #00f;
}
.xaxis {
    fill: #f00;
}
.handle {
    position: absolute;
    top: 339px;
    width: 20px;
    height: 77px;
    background: #4d4d4d;
}
.handle.left {
    left: 0;
    clip-path: polygon(0 0, 100% 8%, 100% 92%, 0 100%);
}
.handle.right {
    right: 0;
    clip-path: polygon(100% 0, 0 8%, 0 92%, 100% 100%);
}
.viewbar {
    position: absolute;
    top: 125px;
    right: 0;
    width: 41px;
    height: 181px;
    padding-top: 10px;
    display: flex;
    flex-direction: column;
    align-items: center;
    background: #fff;
}
.viewbar button, .viewbar svg {
    display: block;
    height: 26px;
}
.viewbar .arrow {
    margin: 11px 0 9px;
    border-width: 5px 5px 0;
}
.viewbar button:nth-of-type(3) {
    margin-top: 10px;
}
.viewbar hr {
    width: 29px;
    margin: 8px 0 7px;
    border: 0;
    border-top: 1px solid #777;
}

/* 显示设置 */
.display {
    display: flex;
    flex-direction: column;
    border-right: 0;
}
.display .head {
    flex: none;
}
.display .grip {
    margin-right: 15px;
}
.display .sub {
    flex: none;
    height: 36px;
    line-height: 36px;
    padding-left: 11px;
    margin-bottom: 26px;
    color: #2381f5;
    white-space: nowrap;
    border-bottom: 1px solid #ddd;
}
.rows {
    flex: 1;
    margin: 0 0 49px 3px;
    border: 1px solid #d9d9d9;
    border-right: 0;
    border-bottom: 3px double #d9d9d9;
    display: flex;
    flex-direction: column;
}
.rows li {
    flex: 1;
    border-bottom: 1px solid #ddd;
    padding-left: 22px;
    display: flex;
    align-items: center;
    white-space: nowrap;
}
.rows li::before {
    content: "";
    align-self: stretch;
    border-left: 1px solid #ddd;
}
.rows li::after {
    content: "";
    width: 21px;
    border-top: 1px solid #ddd;
}
.rows .node {
    padding-left: 15px;
}
.rows .node::before, .rows .node::after {
    display: none;
}
.rows button {
    width: 16px;
    height: 16px;
    line-height: 12px;
    margin-right: 7px;
    border: 1px solid #777;
    border-radius: 2px;
}

/* 状态栏 */
.status {
    flex: none;
    height: 39px;
    padding-bottom: 1px;
    display: flex;
    align-items: center;
    background: #fcfcfc;
    white-space: nowrap;
}
.status b {
    font-weight: 400;
    margin-left: 4px;
}
.info {
    width: 559px;
    display: flex;
}
.floor {
    width: 111px;
    margin-left: -2px;
}
.level {
    width: 175px;
}
.picked {
    width: 138px;
}
.info .picked b, .info .hidden b {
    margin-left: 0;
}
.snaps {
    display: flex;
    gap: 4px;
}
.snaps button {
    width: 31px;
    height: 31px;
    display: flex;
    align-items: center;
    justify-content: center;
    gap: 8px;
    border: 1px solid #999;
    border-radius: 4px;
    background: #fff;
}
.snaps button:has(.arrow) {
    width: 45px;
}
.snaps .on {
    border-color: #2b7de9;
    background: #d5e5fa;
}
.snaps .dim {
    border-color: #bbb;
    margin: 0 3px;
}
.tip {
    margin-left: 18px;
    display: flex;
    align-items: center;
    gap: 4px;
}
.warn {
    width: 112px;
    margin-left: auto;
    display: flex;
    align-items: center;
    gap: 8px;
}
.warn i {
    flex: none;
    width: 18px;
    height: 18px;
    line-height: 18px;
    text-align: center;
    font-weight: 700;
    border-radius: 50%;
    color: #fff;
    background: #f78f2c;
}
.taskbar {
    flex: none;
    height: 10px;
    display: flex;
    padding-left: 54px;
    background: #1b1b1b;
}
.taskbar .window {
    width: 360px;
    background: #f0f0f0;
}
.taskbar .task {
    width: 57px;
    margin-left: 126px;
    background: #474747;
}

/* 错误窗口 */
.dialog {
    position: absolute;
    top: -1px;
    right: 45px;
    width: 627px;
    height: 341px;
    padding: 0 14px;
    border: 1px solid #b5b5b5;
    background: linear-gradient(#fdfdfd 60%, #e6e6ea);
    box-shadow: 0 3px 14px rgba(0, 0, 0, .35);
}
.caption {
    height: 39px;
    padding-bottom: 9px;
    display: flex;
    align-items: center;
    gap: 21px;
}
.caption h1 {
    flex: 1;
    font-size: 18px;
    font-weight: 400;
}
.caption button, .caption svg {
    display: block;
    width: 14px;
    height: 14px;
    color: #555;
}
.frame {
    height: 286px;
    border: 1px solid #bbb;
    background: #fff;
}
.dialog table {
    width: 100%;
    border-collapse: collapse;
    table-layout: fixed;
    white-space: nowrap;
}
.dialog th {
    height: 22px;
    font-weight: 400;
    background: #eee;
    border-right: 1px solid #c4c4c4;
    border-bottom: 1px solid #c4c4c4;
}
.c1 {
    width: 64px;
}
.c2 {
    width: 60px;
}
.c3 {
    width: 60px;
}
.dialog td {
    height: 25px;
    padding-left: 4px;
}
.dialog td svg {
    width: 18px;
    height: 18px;
    margin-right: 8px;
    vertical-align: middle;
    color: #f83b41;
}
.dialog .on {
    background: #d5e9fd;
}
.dialog .on svg {
    color: #b0506e;
}
.resize {
    position: absolute;
    right: 3px;
    bottom: 4px;
}
```
